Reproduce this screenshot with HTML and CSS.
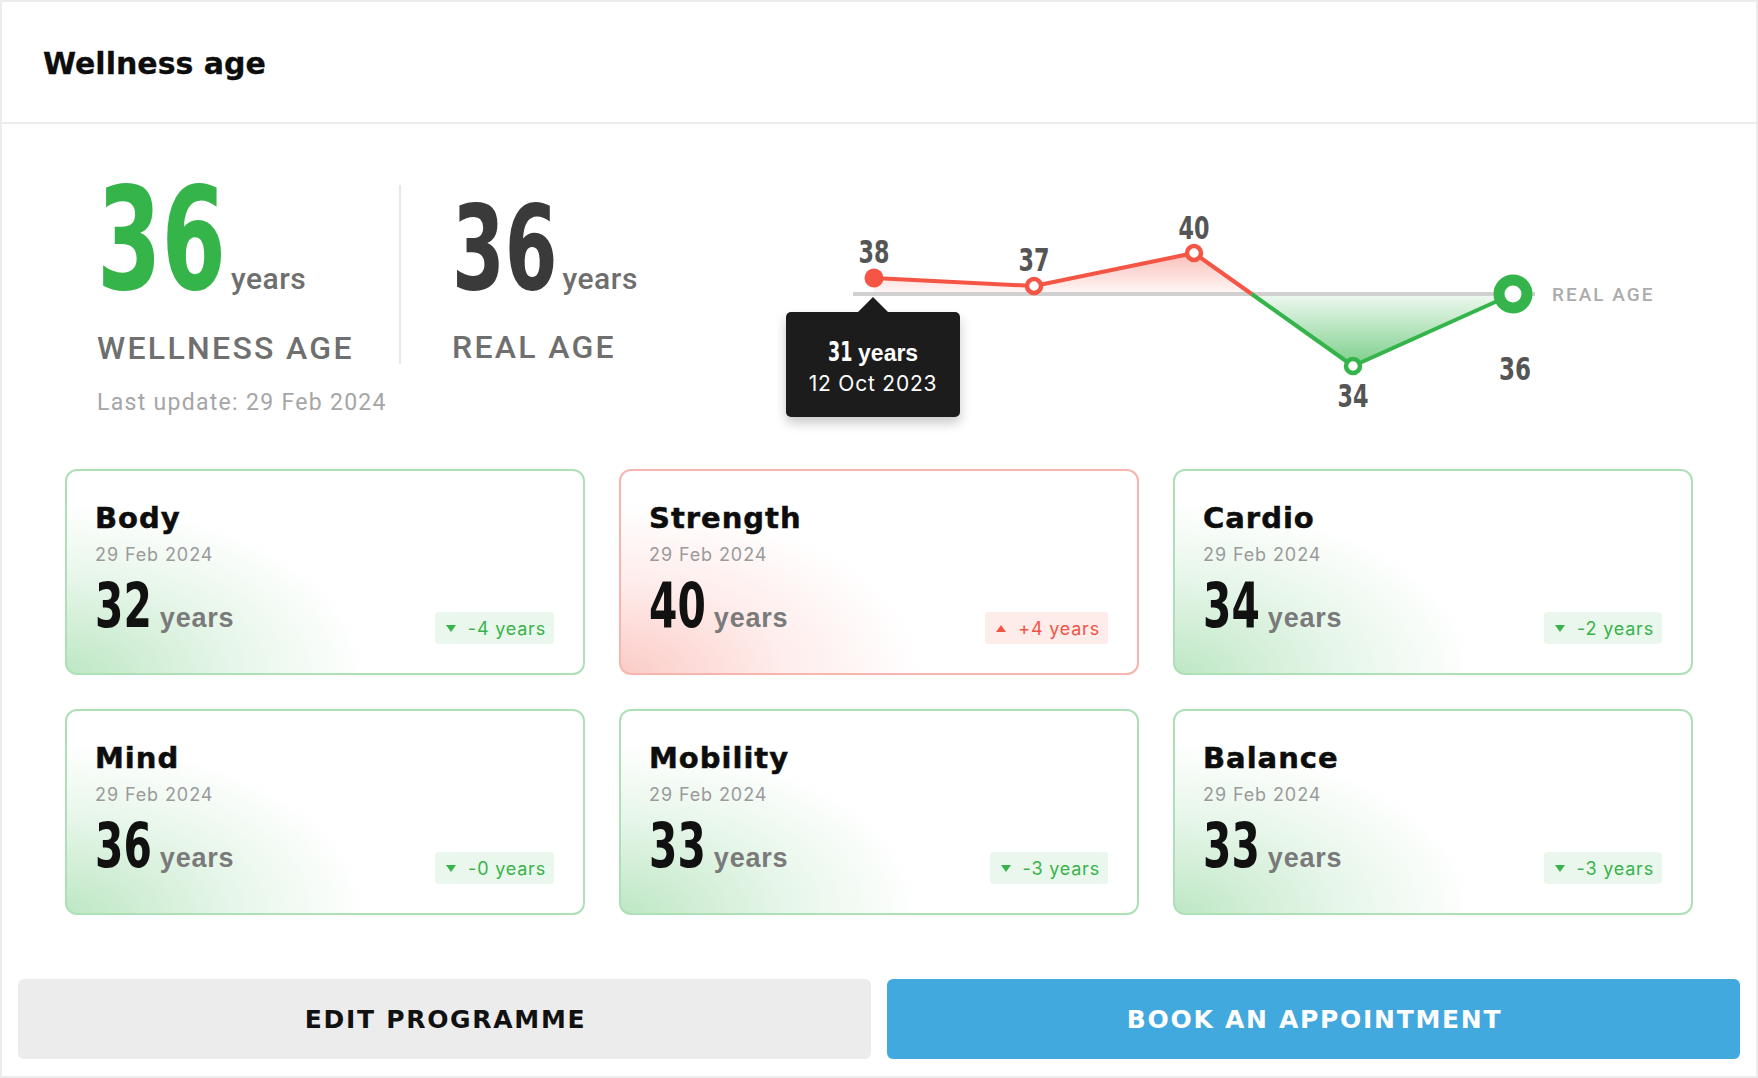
FILE: index.html
```html
<!DOCTYPE html>
<html lang="en">
<head>
<meta charset="utf-8">
<title>Wellness age</title>
<link rel="stylesheet" href="styles.css">
</head>
<body>
<div class="panel">
  <header class="head">
    <h1 class="title">Wellness age</h1>
  </header>
  <main class="main">
    <section class="overview">
      <div class="stats">
        <div class="stat-row">
          <div class="stat stat-wellness">
            <div class="num-row"><span class="cond big-num big-green">36</span><span class="big-unit">years</span></div>
            <div class="stat-label">WELLNESS AGE</div>
          </div>
          <div class="stat stat-real">
            <div class="num-row"><span class="cond big-num big-real">36</span><span class="big-unit">years</span></div>
            <div class="stat-label">REAL AGE</div>
          </div>
        </div>
        <div class="last-update">Last update: 29 Feb 2024</div>
      </div>
      <div class="chart">
        <svg class="chart-svg" width="920" height="240" viewBox="0 0 920 240">
          <defs>
            <linearGradient id="redFill" gradientUnits="userSpaceOnUse" x1="0" y1="68" x2="0" y2="109">
              <stop offset="0" stop-color="#f45545" stop-opacity="0.38"/>
              <stop offset="1" stop-color="#f45545" stop-opacity="0.04"/>
            </linearGradient>
            <linearGradient id="greenFill" gradientUnits="userSpaceOnUse" x1="0" y1="109" x2="0" y2="181">
              <stop offset="0" stop-color="#34b44a" stop-opacity="0.08"/>
              <stop offset="1" stop-color="#34b44a" stop-opacity="0.65"/>
            </linearGradient>
          </defs>
          <polygon points="101,93 261,101 421,68 478.7,109 101,109" fill="url(#redFill)"/>
          <polygon points="478.7,109 580,181 740,109" fill="url(#greenFill)"/>
          <line x1="80" y1="109" x2="762" y2="109" stroke="#d0d0d0" stroke-width="4"/>
          <polyline points="101,93 261,101 421,68 478.7,109" fill="none" stroke="#f45545" stroke-width="4" stroke-linejoin="round"/>
          <polyline points="478.7,109 580,181 740,109" fill="none" stroke="#34b44a" stroke-width="4" stroke-linejoin="round"/>
          <circle cx="101" cy="93" r="9.5" fill="#f45545"/>
          <circle cx="261" cy="101" r="7" fill="#fff" stroke="#f45545" stroke-width="4.5"/>
          <circle cx="421" cy="68" r="7" fill="#fff" stroke="#f45545" stroke-width="4.5"/>
          <circle cx="580" cy="181" r="7" fill="#fff" stroke="#34b44a" stroke-width="4.5"/>
          <circle cx="740" cy="109" r="14" fill="#fff" stroke="#34b44a" stroke-width="11"/>
          <text class="pt-label" x="101" y="78" textLength="31" lengthAdjust="spacingAndGlyphs">38</text>
          <text class="pt-label" x="261" y="86" textLength="31" lengthAdjust="spacingAndGlyphs">37</text>
          <text class="pt-label" x="421" y="54" textLength="31" lengthAdjust="spacingAndGlyphs">40</text>
          <text class="pt-label" x="580" y="222" textLength="31" lengthAdjust="spacingAndGlyphs">34</text>
          <text class="pt-label" x="742" y="195" textLength="32" lengthAdjust="spacingAndGlyphs">36</text>
          <text class="real-label" x="779" y="116">REAL AGE</text>
        </svg>
        <div class="tooltip">
          <div class="tip-main"><span class="cond tip-num">31</span> <span class="tip-unit">years</span></div>
          <div class="tip-date">12 Oct 2023</div>
        </div>
      </div>
    </section>

    <section class="cards">
      <div class="card good">
        <div class="card-title">Body</div>
        <div class="card-date">29 Feb 2024</div>
        <div class="card-bottom">
          <div class="card-value"><span class="cond card-num">32</span><span class="card-unit">years</span></div>
          <span class="badge badge-good"><span class="tri tri-down"></span>-4 years</span>
        </div>
      </div>
      <div class="card bad">
        <div class="card-title">Strength</div>
        <div class="card-date">29 Feb 2024</div>
        <div class="card-bottom">
          <div class="card-value"><span class="cond card-num">40</span><span class="card-unit">years</span></div>
          <span class="badge badge-bad"><span class="tri tri-up"></span>+4 years</span>
        </div>
      </div>
      <div class="card good">
        <div class="card-title">Cardio</div>
        <div class="card-date">29 Feb 2024</div>
        <div class="card-bottom">
          <div class="card-value"><span class="cond card-num">34</span><span class="card-unit">years</span></div>
          <span class="badge badge-good"><span class="tri tri-down"></span>-2 years</span>
        </div>
      </div>
      <div class="card good">
        <div class="card-title">Mind</div>
        <div class="card-date">29 Feb 2024</div>
        <div class="card-bottom">
          <div class="card-value"><span class="cond card-num">36</span><span class="card-unit">years</span></div>
          <span class="badge badge-good"><span class="tri tri-down"></span>-0 years</span>
        </div>
      </div>
      <div class="card good">
        <div class="card-title">Mobility</div>
        <div class="card-date">29 Feb 2024</div>
        <div class="card-bottom">
          <div class="card-value"><span class="cond card-num">33</span><span class="card-unit">years</span></div>
          <span class="badge badge-good"><span class="tri tri-down"></span>-3 years</span>
        </div>
      </div>
      <div class="card good">
        <div class="card-title">Balance</div>
        <div class="card-date">29 Feb 2024</div>
        <div class="card-bottom">
          <div class="card-value"><span class="cond card-num">33</span><span class="card-unit">years</span></div>
          <span class="badge badge-good"><span class="tri tri-down"></span>-3 years</span>
        </div>
      </div>
    </section>
  </main>
  <footer class="actions">
    <button class="btn btn-edit" type="button">EDIT PROGRAMME</button>
    <button class="btn btn-book" type="button">BOOK AN APPOINTMENT</button>
  </footer>
</div>
</body>
</html>
```

FILE: styles.css
```css
html, body {
  margin: 0;
  padding: 0;
  background: #ffffff;
}

.panel {
  width: 1758px;
  height: 1078px;
  box-sizing: border-box;
  border: 2px solid #ececec;
  display: flex;
  flex-direction: column;
  font-family: "Roboto", "Liberation Sans", sans-serif;
  color: #111;
}

/* condensed two-digit numbers: DejaVu Sans Condensed Bold narrowed */
.cond {
  display: inline-block;
  font-family: "DejaVu Sans Condensed", "DejaVu Sans", sans-serif;
  font-stretch: condensed;
  font-weight: bold;
  transform: scaleX(0.72);
  transform-origin: 0 50%;
  margin-right: -0.35em;
}

/* header */
.head {
  height: 122px;
  box-sizing: border-box;
  flex: 0 0 auto;
  border-bottom: 2px solid #ececec;
  display: flex;
  align-items: center;
  padding: 3px 0 0 41px;
}

.title {
  margin: 0;
  font-family: "DejaVu Sans", sans-serif;
  font-weight: bold;
  font-size: 30px;
  line-height: 1;
  color: #0d0d0d;
  -webkit-text-stroke: 0.3px #0d0d0d;
}

/* main */
.main {
  flex: 1 1 auto;
  padding: 61px 63px 0;
}

.overview {
  display: flex;
  align-items: flex-start;
  height: 240px;
}

.stats {
  margin-left: 32px;
}

.stat-row {
  display: flex;
  align-items: flex-start;
}

.stat-wellness {
  width: 304px;
  box-sizing: border-box;
  border-right: 2px solid #e8e8e8;
}

.stat-real {
  padding-left: 51px;
  padding-top: 19px;
}

.num-row {
  display: flex;
  align-items: baseline;
}

.big-num {
  line-height: 0.766;
}

.big-green {
  font-size: 143px;
  color: #35b44a;
}

.big-real {
  font-size: 117px;
  color: #3a3a3a;
}

.big-unit {
  font-family: "Roboto", "Liberation Sans", sans-serif;
  font-weight: 500;
  font-size: 30px;
  line-height: 1;
  color: #6e6e6e;
  margin-left: 5px;
  letter-spacing: 0.5px;
}

.stat-label {
  margin-top: 37px;
  font-family: "Roboto", "Liberation Sans", sans-serif;
  font-weight: 500;
  font-size: 32px;
  line-height: 1;
  letter-spacing: 2.3px;
  color: #6f6f6f;
}

.last-update {
  margin-top: 27px;
  font-family: "Roboto", "Liberation Sans", sans-serif;
  font-size: 23px;
  line-height: 1;
  letter-spacing: 1.3px;
  color: #a6a6a6;
}

/* chart */
.chart {
  margin-left: auto;
  width: 920px;
  height: 240px;
  position: relative;
}

.chart-svg {
  display: block;
}

.pt-label {
  font-family: "DejaVu Sans Condensed", "DejaVu Sans", sans-serif;
  font-stretch: condensed;
  font-weight: bold;
  font-size: 32px;
  fill: #555555;
  text-anchor: middle;
}

.real-label {
  font-family: "Roboto", "Liberation Sans", sans-serif;
  font-weight: 500;
  font-size: 19px;
  letter-spacing: 2px;
  fill: #ababab;
}

.tooltip {
  position: absolute;
  left: 13px;
  top: 127px;
  width: 174px;
  height: 105px;
  box-sizing: border-box;
  background: #1c1c1c;
  border-radius: 5px;
  box-shadow: 0 6px 12px rgba(0, 0, 0, 0.22);
  color: #ffffff;
  display: flex;
  flex-direction: column;
  align-items: center;
  padding-top: 26px;
  gap: 8px;
}

.tooltip::before {
  content: "";
  position: absolute;
  left: 50%;
  top: -15px;
  margin-left: -15px;
  border-left: 15px solid transparent;
  border-right: 15px solid transparent;
  border-bottom: 15px solid #1c1c1c;
}

.tip-main {
  line-height: 1;
  white-space: nowrap;
}

.tip-num {
  font-size: 27px;
  margin-right: -0.28em;
}

.tip-unit {
  font-family: "Liberation Sans", sans-serif;
  font-weight: bold;
  font-size: 23px;
}

.tip-date {
  font-family: "Inter", "Liberation Sans", sans-serif;
  font-size: 21px;
  line-height: 1;
  letter-spacing: 0.8px;
}

/* cards */
.cards {
  margin-top: 44px;
  display: grid;
  grid-template-columns: repeat(3, 1fr);
  gap: 34px;
}

.card {
  height: 206px;
  box-sizing: border-box;
  border: 2px solid #aadfb5;
  border-radius: 12px;
  padding: 33px 29px 29px 28px;
  display: flex;
  flex-direction: column;
}

.card.good {
  border-color: #ade0b7;
  background: radial-gradient(300px 170px at 0% 100%, rgba(52, 180, 74, 0.32), rgba(52, 180, 74, 0.12) 55%, rgba(52, 180, 74, 0) 100%), #ffffff;
}

.card.bad {
  border-color: #f7b5ad;
  background: radial-gradient(300px 170px at 0% 100%, rgba(244, 85, 69, 0.3), rgba(244, 85, 69, 0.1) 55%, rgba(244, 85, 69, 0) 100%), #ffffff;
}

.card-title {
  font-family: "DejaVu Sans", sans-serif;
  font-weight: bold;
  font-size: 29px;
  line-height: 1;
  letter-spacing: 1px;
  color: #0d0d0d;
  -webkit-text-stroke: 0.5px #0d0d0d;
}

.card-date {
  margin-top: 13px;
  font-family: "Inter", "Liberation Sans", sans-serif;
  font-size: 18px;
  line-height: 1;
  letter-spacing: 0.9px;
  color: #9a9a9a;
}

.card-bottom {
  margin-top: auto;
  display: flex;
  justify-content: space-between;
  align-items: flex-end;
}

.card-value {
  display: flex;
  align-items: baseline;
  padding-bottom: 12px;
}

.card-num {
  font-size: 63px;
  line-height: 0.766;
  color: #111111;
}

.card-unit {
  margin-left: 8px;
  font-family: "Liberation Sans", sans-serif;
  font-weight: bold;
  font-size: 27px;
  line-height: 1;
  letter-spacing: 0.8px;
  color: #7a7a7a;
}

.badge {
  height: 32px;
  box-sizing: border-box;
  display: inline-flex;
  align-items: center;
  gap: 12px;
  padding: 0 8px 0 11px;
  border-radius: 4px;
  font-family: "Inter", "Liberation Sans", sans-serif;
  font-size: 18px;
  letter-spacing: 0.8px;
}

.badge-good {
  background: #eaf7ec;
  color: #38b34a;
}

.badge-bad {
  background: #fdecea;
  color: #f25546;
}

.tri {
  width: 0;
  height: 0;
  border-left: 5.5px solid transparent;
  border-right: 5.5px solid transparent;
}

.tri-down {
  border-top: 7px solid #38b34a;
}

.tri-up {
  border-bottom: 7px solid #f25546;
}

/* actions */
.actions {
  flex: 0 0 auto;
  display: flex;
  gap: 16px;
  padding: 0 16px 17px;
}

.btn {
  flex: 1 1 0;
  height: 80px;
  border: none;
  border-radius: 6px;
  font-family: "DejaVu Sans", sans-serif;
  font-weight: bold;
  font-size: 25px;
  letter-spacing: 1.7px;
  padding: 0 0 0 2px;
  cursor: pointer;
}

.btn-edit {
  background: #ececec;
  color: #111111;
}

.btn-book {
  background: #42a9df;
  color: #ffffff;
}
```
